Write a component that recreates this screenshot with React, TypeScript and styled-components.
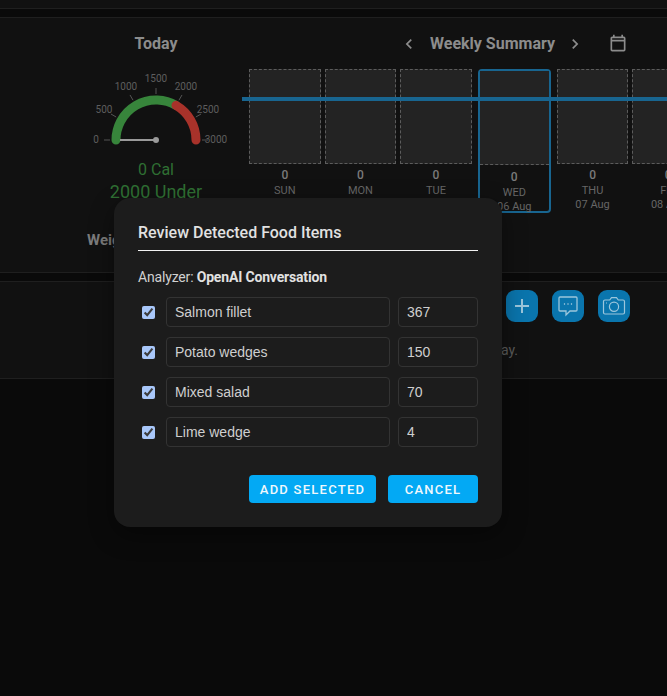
import React from "react";
import styled, { createGlobalStyle } from "styled-components";

const GlobalStyle = createGlobalStyle`
  html, body {
    margin: 0;
    padding: 0;
    background: #0a0a0a;
    font-family: Roboto, "Liberation Sans", sans-serif;
    color-scheme: dark;
    overflow: hidden;
  }
`;

const Page = styled.div`
  position: relative;
  width: 667px;
  height: 696px;
  overflow: hidden;
  background: #0a0a0a;
`;

const TopStrip = styled.div`
  height: 8px;
  background: #111;
  border-bottom: 1px solid #1f1f1f;
  margin-bottom: 8px;
`;

const Card = styled.section`
  background: #111;
  border-top: 1px solid #1f1f1f;
  border-bottom: 1px solid #1f1f1f;
  margin-bottom: 8px;
`;

const SummaryCard = styled(Card)`
  display: flex;
  height: 256px;
  padding-top: 14px;
  box-sizing: border-box;
`;

const TodayColumn = styled.div`
  flex: 0 0 186px;
  margin-left: 63px;
  display: flex;
  flex-direction: column;
  align-items: center;
`;

const CardTitle = styled.h2`
  margin: 0;
  font-size: 16px;
  line-height: 24px;
  font-weight: 700;
  color: #8c8c8c;
`;

const WeekTitle = styled(CardTitle)`
  margin-left: 11px;
`;

const GaugeSvg = styled.svg`
  display: block;
  margin-top: 14px;
  margin-bottom: 9px;
  overflow: visible;
`;

const Calories = styled.div<{ $big?: boolean }>`
  color: #2f6f33;
  font-size: ${({ $big }) => ($big ? "18px" : "16px")};
  line-height: ${({ $big }) => ($big ? "21px" : "22px")};
  white-space: nowrap;
`;

const WeightLabel = styled.div`
  align-self: flex-start;
  margin: 27px 0 0 24px;
  font-size: 15px;
  font-weight: 700;
  line-height: 22px;
  color: #7c7c7c;
`;

const WeekColumn = styled.div`
  flex: 1;
  min-width: 0;
  margin-left: -7px;
`;

const WeekHeader = styled.div`
  display: flex;
  align-items: center;
  height: 24px;
  padding-left: 157px;
  color: #8c8c8c;
`;

const HeaderIcon = styled.svg<{ $gap?: number }>`
  flex: none;
  fill: currentColor;
  margin-left: ${({ $gap }) => $gap ?? 0}px;
`;

const WeekTrack = styled.div`
  position: relative;
  margin-top: 13px;
  padding-left: 7px;
  display: flex;
  gap: 4px;
`;

const GoalLine = styled.div`
  position: absolute;
  left: 0;
  right: 0;
  top: 28px;
  height: 4px;
  background: #186590;
`;

const Day = styled.div<{ $active?: boolean }>`
  flex: none;
  box-sizing: border-box;
  width: ${({ $active }) => ($active ? "73px" : "71.6px")};
  height: ${({ $active }) => ($active ? "144px" : "auto")};
  margin: ${({ $active }) => ($active ? "0 2px" : "0")};
  border: ${({ $active }) => ($active ? "2px solid #186590" : "none")};
  border-radius: 4px;
  text-align: center;
`;

const DayBar = styled.div<{ $active?: boolean }>`
  box-sizing: border-box;
  height: ${({ $active }) => ($active ? "94px" : "95px")};
  background: #232323;
  border: 1px dashed #5c5c5c;
  border-width: ${({ $active }) => ($active ? "0 0 1px" : "1px")};
`;

const DayValue = styled.div<{ $active?: boolean }>`
  margin-top: ${({ $active }) => ($active ? "5px" : "4px")};
  font-size: 12px;
  line-height: 15px;
  font-weight: 500;
  color: #7a7a7a;
`;

const DayName = styled.div`
  font-size: 11px;
  line-height: 15px;
  color: #666;
`;

const DayDate = styled.div`
  font-size: 11px;
  line-height: 13px;
  color: #666;
`;

const LogCard = styled(Card)`
  height: 98px;
  box-sizing: border-box;
  padding: 8px 37px 0 0;
`;

const ActionRow = styled.div`
  display: flex;
  justify-content: flex-end;
  gap: 14px;
`;

const ActionButton = styled.div`
  width: 32px;
  height: 32px;
  border-radius: 9px;
  background: #0a75ad;
  color: #9cc6dc;
  display: flex;
  align-items: center;
  justify-content: center;
`;

const EmptyNote = styled.p`
  margin: 19px 112px 0 0;
  text-align: right;
  font-size: 14px;
  line-height: 18px;
  color: #5c5c5c;
`;

const Dialog = styled.div`
  position: absolute;
  left: 114px;
  top: 198px;
  width: 388px;
  height: 329px;
  box-sizing: border-box;
  padding: 24px;
  background: #1c1c1c;
  border-radius: 16px;
  box-shadow: 0 8px 24px rgba(0, 0, 0, 0.4);
`;

const DialogTitle = styled.h3`
  margin: 0;
  height: 28px;
  border-bottom: 1px solid #f2f2f2;
  font-size: 16px;
  line-height: 22px;
  font-weight: 500;
  color: #e1e1e1;
`;

const Analyzer = styled.div`
  margin-top: 16px;
  font-size: 14px;
  letter-spacing: -0.17px;
  line-height: 20px;
  color: #d0d0d0;

  strong {
    font-weight: 700;
    color: #e1e1e1;
  }
`;

const ItemList = styled.div`
  margin-top: 10px;
  display: flex;
  flex-direction: column;
  gap: 10px;
`;

const ItemRow = styled.label`
  display: flex;
  align-items: center;
  gap: 8px;
`;

const ItemCheck = styled.input`
  flex: none;
  width: 13px;
  height: 13px;
  margin: 0 3px 0 4px;
  accent-color: #a8c7fa;
`;

const ItemInput = styled.input<{ $narrow?: boolean }>`
  box-sizing: border-box;
  flex: ${({ $narrow }) => ($narrow ? "0 0 80px" : "1")};
  min-width: 0;
  height: 30px;
  padding: 0 8px;
  background: #1c1c1c;
  border: 1px solid #333;
  border-radius: 4px;
  outline: none;
  font-family: "Liberation Sans", Arial, sans-serif;
  font-size: 14px;
  color: #cfcfcf;
`;

const DialogActions = styled.div`
  margin-top: 28px;
  display: flex;
  justify-content: flex-end;
  gap: 12px;
`;

const DialogButton = styled.button<{ $width: number }>`
  width: ${({ $width }) => $width}px;
  height: 28px;
  padding: 0;
  border: none;
  border-radius: 4px;
  background: #03a9f4;
  color: #f0f8fc;
  font-family: Roboto, sans-serif;
  font-size: 13px;
  font-weight: 500;
  letter-spacing: 1.25px;
`;

const days = [
  { name: "SUN", date: "03 Aug" },
  { name: "MON", date: "04 Aug" },
  { name: "TUE", date: "05 Aug" },
  { name: "WED", date: "06 Aug", active: true },
  { name: "THU", date: "07 Aug" },
  { name: "FRI", date: "08 Aug" },
  { name: "SAT", date: "09 Aug" },
];

const items = [
  { name: "Salmon fillet", cal: "367" },
  { name: "Potato wedges", cal: "150" },
  { name: "Mixed salad", cal: "70" },
  { name: "Lime wedge", cal: "4" },
];

const gaugeTicks = [0, 500, 1000, 1500, 2000, 2500, 3000];

const polar = (value: number, radius: number) => {
  const angle = Math.PI * (1 - value / 3000);
  return {
    x: 71 + radius * Math.cos(angle),
    y: 70 - radius * Math.sin(angle),
  };
};

const arc = (from: number, to: number) => {
  const a = polar(from, 40);
  const b = polar(to, 40);
  return `M${a.x} ${a.y}A40 40 0 0 1 ${b.x} ${b.y}`;
};

const Gauge = () => (
  <GaugeSvg width="142" height="80" viewBox="0 0 142 80">
    {gaugeTicks.map((tick) => {
      const a = polar(tick, 46);
      const b = polar(tick, 52);
      return (
        <g key={tick}>
          <line x1={a.x} y1={a.y} x2={b.x} y2={b.y} stroke="#555" strokeWidth="1" />
          <text
            x={polar(tick, 60).x}
            y={polar(tick, 61).y + 3}
            textAnchor="middle"
            fontSize="10"
            fontFamily="Roboto, sans-serif"
            fill="#5e5e5e"
          >
            {tick}
          </text>
        </g>
      );
    })}
    <path d={arc(0, 2000)} fill="none" stroke="#37853b" strokeWidth="9" strokeLinecap="round" />
    <path d={arc(2000, 3000)} fill="none" stroke="#a8322a" strokeWidth="9" strokeLinecap="round" />
    <line x1="35" y1="70" x2="71" y2="70" stroke="#9a9a9a" strokeWidth="2" />
    <circle cx="71" cy="70" r="3" fill="#9a9a9a" />
  </GaugeSvg>
);

export default function App() {
  return (
    <Page>
      <GlobalStyle />
      <TopStrip />
      <SummaryCard>
        <TodayColumn>
          <CardTitle>Today</CardTitle>
          <Gauge />
          <Calories>0 Cal</Calories>
          <Calories $big>2000 Under</Calories>
          <WeightLabel>Weight</WeightLabel>
        </TodayColumn>
        <WeekColumn>
          <WeekHeader>
            <HeaderIcon width="20" height="20" viewBox="0 0 24 24">
              <path d="M15.41 16.58 10.83 12l4.58-4.59L14 6l-6 6 6 6z" />
            </HeaderIcon>
            <WeekTitle>Weekly Summary</WeekTitle>
            <HeaderIcon width="20" height="20" viewBox="0 0 24 24" $gap={10}>
              <path d="M8.59 16.58 13.17 12 8.59 7.41 10 6l6 6-6 6z" />
            </HeaderIcon>
            <HeaderIcon width="20" height="20" viewBox="0 0 24 24" $gap={23}>
              <path d="M19 3h-1V1h-2v2H8V1H6v2H5c-1.11 0-2 .9-2 2v14a2 2 0 0 0 2 2h14a2 2 0 0 0 2-2V5a2 2 0 0 0-2-2m0 16H5V9h14v10m0-12H5V5h14v2Z" />
            </HeaderIcon>
          </WeekHeader>
          <WeekTrack>
            {days.map((day) => (
              <Day key={day.name} $active={day.active}>
                <DayBar $active={day.active} />
                <DayValue $active={day.active}>0</DayValue>
                <DayName>{day.name}</DayName>
                <DayDate>{day.date}</DayDate>
              </Day>
            ))}
            <GoalLine />
          </WeekTrack>
        </WeekColumn>
      </SummaryCard>
      <LogCard>
        <ActionRow>
          <ActionButton>
            <svg width="24" height="24" viewBox="0 0 24 24" fill="currentColor">
              <path d="M19 13h-6v6h-2v-6H5v-2h6V5h2v6h6v2z" />
            </svg>
          </ActionButton>
          <ActionButton>
            <svg width="24" height="24" viewBox="0 0 24 24" fill="none" stroke="currentColor" strokeWidth="1.3">
              <path d="M4 3h16a1 1 0 0 1 1 1v12a1 1 0 0 1-1 1h-6l-4 4v-4H4a1 1 0 0 1-1-1V4a1 1 0 0 1 1-1z" />
              <path d="M7.9 10h1.2M11.4 10h1.2M14.9 10h1.2" />
            </svg>
          </ActionButton>
          <ActionButton>
            <svg width="24" height="24" viewBox="0 0 24 24" fill="none" stroke="currentColor" strokeWidth="1.2">
              <path d="M3 6h4.7l1.8-2.3h5l1.8 2.3h4.7a1.5 1.5 0 0 1 1.5 1.5v11a1.5 1.5 0 0 1-1.5 1.5H3a1.5 1.5 0 0 1-1.5-1.5v-11A1.5 1.5 0 0 1 3 6z" />
              <circle cx="12" cy="12.7" r="4.6" />
              <path d="M4 9h1" />
            </svg>
          </ActionButton>
        </ActionRow>
        <EmptyNote>No food items logged for this day.</EmptyNote>
      </LogCard>
      <Dialog>
        <DialogTitle>Review Detected Food Items</DialogTitle>
        <Analyzer>
          Analyzer: <strong>OpenAI Conversation</strong>
        </Analyzer>
        <ItemList>
          {items.map((item) => (
            <ItemRow key={item.name}>
              <ItemCheck type="checkbox" defaultChecked />
              <ItemInput defaultValue={item.name} />
              <ItemInput $narrow defaultValue={item.cal} />
            </ItemRow>
          ))}
        </ItemList>
        <DialogActions>
          <DialogButton $width={127}>ADD SELECTED</DialogButton>
          <DialogButton $width={90}>CANCEL</DialogButton>
        </DialogActions>
      </Dialog>
    </Page>
  );
}
